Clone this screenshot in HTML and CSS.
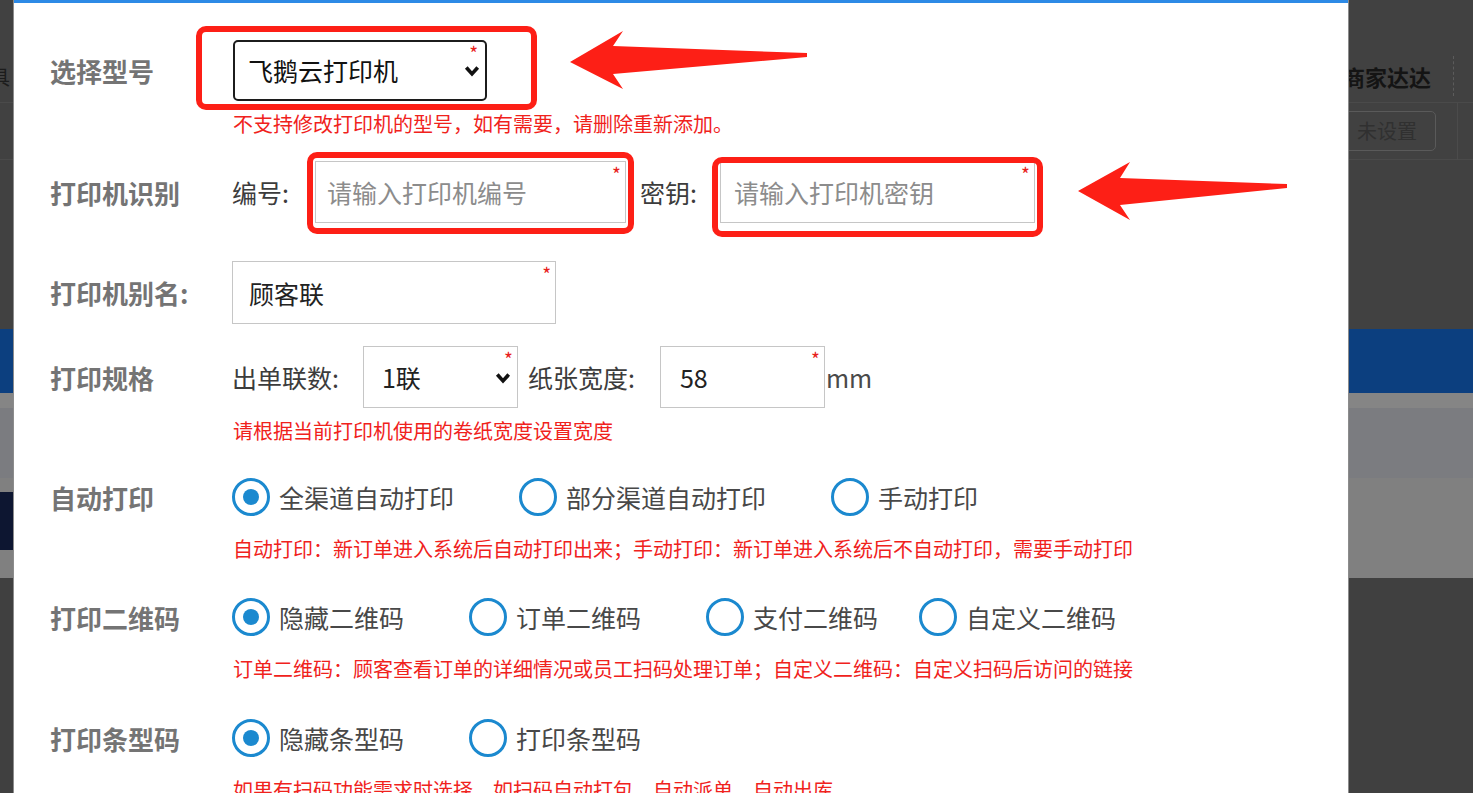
FILE: index.html
```html
<!DOCTYPE html>
<html>

<head>
    <meta charset="UTF-8">
    <title>添加打印机</title>
    <link rel="stylesheet" href="styles.css">
</head>

<body>
    <!-- 뒤에 깔린 페이지 (마스크로 어둡게 보임) -->
    <div class="app">
        <div class="app-top"></div>
        <div class="app-head">
            <span class="app-tool">工具</span>
            <span class="app-title">商家达达</span>
            <span class="app-dots"></span>
        </div>
        <div class="app-row">
            <span class="app-btn">未设置</span>
            <span class="app-sep"></span>
        </div>
        <div class="app-fill"></div>
        <div class="app-bar"></div>
        <div class="app-gray">
            <div class="app-gray-top"></div>
            <div class="app-gray-mid"></div>
            <div class="app-gray-low">
                <div class="app-side"></div>
            </div>
        </div>
        <div class="app-rest"></div>
    </div>

    <!-- 打印机设置 弹窗 -->
    <div class="modal">
        <form class="form">
            <div class="group">
                <div class="row">
                    <div class="label">选择型号</div>
                    <div class="field field-type">
                        <select class="select select-type">
                            <option>飞鹅云打印机</option>
                        </select>
                        <svg class="chev" viewBox="0 0 14 14"><polyline points="2,4 7,9.5 12,4" /></svg>
                        <span class="req">*</span>
                    </div>
                </div>
                <div class="tip">不支持修改打印机的型号，如有需要，请删除重新添加。</div>
            </div>

            <div class="group group-id">
                <div class="row">
                    <div class="label">打印机识别</div>
                    <span class="text">编号:</span>
                    <div class="field field-sn">
                        <input class="input input-sn" type="text" placeholder="请输入打印机编号">
                        <span class="req">*</span>
                    </div>
                    <span class="text text-key">密钥:</span>
                    <div class="field field-key">
                        <input class="input input-key" type="text" placeholder="请输入打印机密钥">
                        <span class="req">*</span>
                    </div>
                </div>
            </div>

            <div class="group group-alias">
                <div class="row">
                    <div class="label">打印机别名:</div>
                    <div class="field">
                        <input class="input input-alias" type="text" value="顾客联">
                        <span class="req">*</span>
                    </div>
                </div>
            </div>

            <div class="group group-spec">
                <div class="row">
                    <div class="label">打印规格</div>
                    <span class="text">出单联数:</span>
                    <div class="field field-copies">
                        <select class="select select-copies">
                            <option>1联</option>
                            <option>2联</option>
                            <option>3联</option>
                        </select>
                        <svg class="chev" viewBox="0 0 14 14"><polyline points="2,4 7,9.5 12,4" /></svg>
                        <span class="req">*</span>
                    </div>
                    <span class="text text-width">纸张宽度:</span>
                    <div class="field field-width">
                        <input class="input input-width" type="text" value="58">
                        <span class="req">*</span>
                    </div>
                    <span class="text text-unit">mm</span>
                </div>
                <div class="tip">请根据当前打印机使用的卷纸宽度设置宽度</div>
            </div>

            <div class="group group-auto">
                <div class="row row-radio">
                    <div class="label">自动打印</div>
                    <label class="opt"><input type="radio" name="auto" checked><span class="dot"></span>全渠道自动打印</label>
                    <label class="opt"><input type="radio" name="auto"><span class="dot"></span>部分渠道自动打印</label>
                    <label class="opt"><input type="radio" name="auto"><span class="dot"></span>手动打印</label>
                </div>
                <div class="tip">自动打印：新订单进入系统后自动打印出来；手动打印：新订单进入系统后不自动打印，需要手动打印</div>
            </div>

            <div class="group">
                <div class="row row-radio">
                    <div class="label">打印二维码</div>
                    <label class="opt"><input type="radio" name="qr" checked><span class="dot"></span>隐藏二维码</label>
                    <label class="opt"><input type="radio" name="qr"><span class="dot"></span>订单二维码</label>
                    <label class="opt opt-tight"><input type="radio" name="qr"><span class="dot"></span>支付二维码</label>
                    <label class="opt"><input type="radio" name="qr"><span class="dot"></span>自定义二维码</label>
                </div>
                <div class="tip">订单二维码：顾客查看订单的详细情况或员工扫码处理订单；自定义二维码：自定义扫码后访问的链接</div>
            </div>

            <div class="group group-bar">
                <div class="row row-radio">
                    <div class="label">打印条型码</div>
                    <label class="opt"><input type="radio" name="bar" checked><span class="dot"></span>隐藏条型码</label>
                    <label class="opt"><input type="radio" name="bar"><span class="dot"></span>打印条型码</label>
                </div>
                <div class="tip">如果有扫码功能需求时选择，如扫码自动打包，自动派单，自动出库</div>
            </div>
        </form>

        <!-- 빨간 표시 (박스 + 화살표) -->
        <svg class="marks" width="1334" height="793" viewBox="0 0 1334 793">
            <g fill="none" stroke="#fd1f16" stroke-width="6">
                <rect x="185" y="29" width="335" height="78" rx="7" />
                <rect x="296" y="155" width="321" height="76" rx="7" />
                <rect x="701" y="160" width="325" height="74" rx="7" />
            </g>
            <polygon fill="#fd1f16" points="556,62 609,31 599,46 793,53 793,57 599,74 609,89" />
            <polygon fill="#fd1f16" points="1064,191 1116,162 1106,178 1273,184 1273,188 1106,205 1116,220" />
        </svg>
    </div>
</body>

</html>
```

FILE: styles.css
```css
body {
    margin: 0;
    background: #ffffff;
    overflow: hidden;
    font-family: "Noto Sans CJK SC", "Microsoft YaHei", sans-serif;
}

/* 뒤 페이지 */
.app {
    width: 1473px;
    height: 793px;
    background: #414141;
    display: flex;
    flex-direction: column;
    overflow: hidden;
}

.app-top {
    height: 50px;
    flex: none;
}

.app-head {
    height: 53px;
    flex: none;
    display: flex;
    align-items: center;
    box-sizing: border-box;
    border-bottom: 1px solid #4a4a4a;
}

.app-tool {
    margin-left: -30px;
    font-size: 20px;
    color: #1c1c1c;
}

.app-title {
    margin-left: auto;
    margin-right: 22px;
    font-size: 22px;
    font-weight: 700;
    color: #141414;
}

.app-dots {
    width: 0;
    height: 40px;
    border-left: 1px dashed #5c5c5c;
    margin-right: 19px;
}

.app-row {
    height: 57px;
    flex: none;
    display: flex;
    align-items: center;
    justify-content: flex-end;
    box-sizing: border-box;
    border-bottom: 1px solid #4a4a4a;
}

.app-btn {
    height: 40px;
    line-height: 38px;
    box-sizing: border-box;
    padding: 0 18px 0 40px;
    border: 1px solid #5a5a5a;
    border-radius: 5px;
    font-size: 20px;
    color: #303030;
    margin-right: 21px;
}

.app-sep {
    width: 1px;
    height: 57px;
    background: #4b4b4b;
    margin-right: 15px;
}

.app-fill {
    height: 169px;
    flex: none;
}

.app-bar {
    height: 64px;
    flex: none;
    background: #0c3f7f;
}

.app-gray {
    flex: none;
    background: #808080;
}

.app-gray-top {
    height: 15px;
    background: #858585;
}

.app-gray-mid {
    height: 70px;
    background: #7b7c80;
}

.app-gray-low {
    height: 100px;
    overflow: hidden;
}

.app-side {
    width: 14px;
    height: 58px;
    margin-top: 14px;
    background: #0d1631;
}

.app-rest {
    flex: 1;
    background: #404040;
}

/* 弹窗 */
.modal {
    position: absolute;
    left: 14px;
    top: 0;
    width: 1334px;
    height: 793px;
    box-sizing: border-box;
    background: #ffffff;
    border-top: 3px solid #2d8ae6;
    box-shadow: -1px 0 0 #8c8c8c, 1px 0 0 #8c8c8c;
    overflow: hidden;
}

.form {
    margin: 0;
    padding: 36px 0 0 36px;
}

.group {
    margin-top: 36px;
}

.group:first-child {
    margin-top: 0;
}

.group-id {
    margin-top: 25px;
}

.group-alias {
    margin-top: 38px;
}

.group-spec {
    margin-top: 22px;
}

.group-auto {
    margin-top: 34px;
}

.group-bar {
    margin-top: 37px;
}

.row {
    display: flex;
    align-items: center;
    min-height: 62px;
}

.row-radio {
    min-height: 40px;
}

.label {
    width: 182px;
    flex: none;
    font-size: 26px;
    font-weight: 700;
    color: #747474;
    white-space: nowrap;
}

.text {
    font-size: 25px;
    color: #3c3c3c;
    white-space: nowrap;
}

.text-key {
    margin-left: 14px;
}

.text-width {
    margin-left: 10px;
}

.text-unit {
    margin-left: 1px;
    color: #4a4a4a;
}

.field {
    position: relative;
}

.field-type {
    margin-left: 1px;
}

.field-sn {
    margin-left: 26px;
}

.field-key {
    margin-left: 23px;
}

.field-copies {
    margin-left: 24px;
}

.field-width {
    margin-left: 25px;
}

.input,
.select {
    display: block;
    height: 62px;
    box-sizing: border-box;
    border: 1px solid #c6c6c6;
    border-radius: 0;
    background: #ffffff;
    padding: 0 16px;
    font-family: inherit;
    font-size: 25px;
    color: #222222;
    outline: none;
}

.select {
    appearance: none;
    -webkit-appearance: none;
}

.input::placeholder {
    color: #8c8c8c;
}

.select-type {
    width: 254px;
    height: 61px;
    border: 2px solid #1c1c1c;
    border-radius: 5px;
    padding-left: 13px;
    color: #111111;
}

.input-sn {
    width: 311px;
    padding-left: 11px;
}

.input-key {
    width: 315px;
    padding-left: 13px;
}

.input-alias {
    width: 324px;
    height: 63px;
}

.select-copies {
    width: 155px;
    padding-left: 18px;
}

.input-width {
    width: 165px;
    padding-left: 19px;
}

.chev {
    position: absolute;
    right: 7px;
    top: 50%;
    margin-top: -7px;
    width: 16px;
    height: 16px;
    fill: none;
    stroke: #111111;
    stroke-width: 3.2;
    pointer-events: none;
}

.req {
    position: absolute;
    top: 3px;
    right: 5px;
    font-size: 19px;
    line-height: 1;
    color: #e8211a;
}

.field-type .req {
    right: 9px;
}

/* 单选 */
.opt {
    display: flex;
    align-items: center;
    margin-right: 65px;
    font-size: 25px;
    color: #484848;
    white-space: nowrap;
}

.opt-tight {
    margin-right: 41px;
}

.opt input {
    display: none;
}

.dot {
    width: 38px;
    height: 38px;
    box-sizing: border-box;
    border: 3px solid #1b89cf;
    border-radius: 50%;
    margin-right: 9px;
    display: flex;
    align-items: center;
    justify-content: center;
}

.opt input:checked + .dot::after {
    content: "";
    width: 16px;
    height: 16px;
    border-radius: 50%;
    background: #1b89cf;
}

.tip {
    margin: 11px 0 0 183px;
    font-size: 20px;
    line-height: 24px;
    color: #f0221c;
    white-space: nowrap;
}

.row-radio + .tip {
    margin-top: 20px;
}

.marks {
    position: absolute;
    left: 0;
    top: -3px;
    pointer-events: none;
}
```
